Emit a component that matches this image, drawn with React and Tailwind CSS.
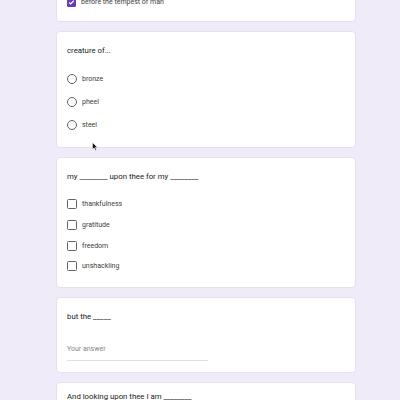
import React from 'react'

// ── Small form controls ─────────────────────────────────────────────────────
function Radio({ label }) {
  return (
    <div className="flex items-center h-[23px]">
      <span className="w-[10px] h-[10px] rounded-full border-[1.5px] border-[#5f6368] shrink-0" />
      <span className="ml-[5px] text-[7px] leading-[10px] text-[#3c4043]">{label}</span>
    </div>
  )
}

function Check({ label, checked }) {
  return (
    <div className="flex items-center h-[20.7px]">
      {checked ? (
        <span className="w-[9px] h-[9px] rounded-[1.5px] bg-[#673ab7] shrink-0 flex items-center justify-center">
          <svg width="7" height="7" viewBox="0 0 24 24" fill="none" stroke="white" strokeWidth="4">
            <path d="M4 12l5 5L20 6" />
          </svg>
        </span>
      ) : (
        <span className="w-[10px] h-[10px] rounded-[1.5px] border-[1.5px] border-[#5f6368] shrink-0" />
      )}
      <span className="ml-[5px] text-[7px] leading-[10px] text-[#3c4043]">{label}</span>
    </div>
  )
}

function Card({ className = '', children }) {
  return (
    <div className={`bg-white rounded-[4px] border border-[#e6e0ee] px-[10px] ${className}`}>
      {children}
    </div>
  )
}

export default function App() {
  return (
    <div
      className="relative w-[400px] h-[400px] overflow-hidden bg-[#f0ebf8]"
      style={{ fontFamily: 'Roboto, "Liberation Sans", sans-serif' }}
    >
      <div className="w-[300px] ml-[56px] flex flex-col gap-[9px]">

        {/* ── Card cut off at the top ── */}
        <Card className="h-[42px] -mt-[20px] pt-[11px]">
          <Check label="before the tempest of man" checked />
        </Card>

        {/* ── Radio question ── */}
        <Card className="h-[117px] pt-[13px]">
          <p className="text-[7.8px] leading-[12px] text-[#202124]">creature of...</p>
          <div className="mt-[10px]">
            <Radio label="bronze" />
            <Radio label="pheel" />
            <Radio label="steel" />
          </div>
        </Card>

        {/* ── Checkbox question ── */}
        <Card className="h-[131px] pt-[13px]">
          <p className="text-[7.8px] leading-[12px] text-[#202124]">
            my ________ upon thee for my ________
          </p>
          <div className="mt-[11px]">
            <Check label="thankfulness" />
            <Check label="gratitude" />
            <Check label="freedom" />
            <Check label="unshackling" />
          </div>
        </Card>

        {/* ── Short answer ── */}
        <Card className="h-[76px] pt-[13px]">
          <p className="text-[7.8px] leading-[12px] text-[#202124]">but the _____</p>
          <div className="mt-[11px] w-[141px] border-b border-[#e0e0e0] pb-[2px]">
            <span className="text-[7px] leading-[12px] text-[#80868b]">Your answer</span>
          </div>
        </Card>

        {/* ── Next card, cut off ── */}
        <Card className="h-[60px] pt-[8px]">
          <p className="text-[7.8px] leading-[12px] text-[#202124]">And looking upon thee I am ________</p>
        </Card>
      </div>

      {/* ── Mouse pointer ── */}
      <svg className="absolute left-[92px] top-[142px]" width="6" height="9" viewBox="0 0 6 9">
        <path d="M0.5 0.5 L0.5 7.5 L2.2 5.8 L3.4 8.5 L4.4 8 L3.3 5.4 L5.5 5.4 Z" fill="#111" stroke="#fff" strokeWidth="0.5" />
      </svg>
    </div>
  )
}
